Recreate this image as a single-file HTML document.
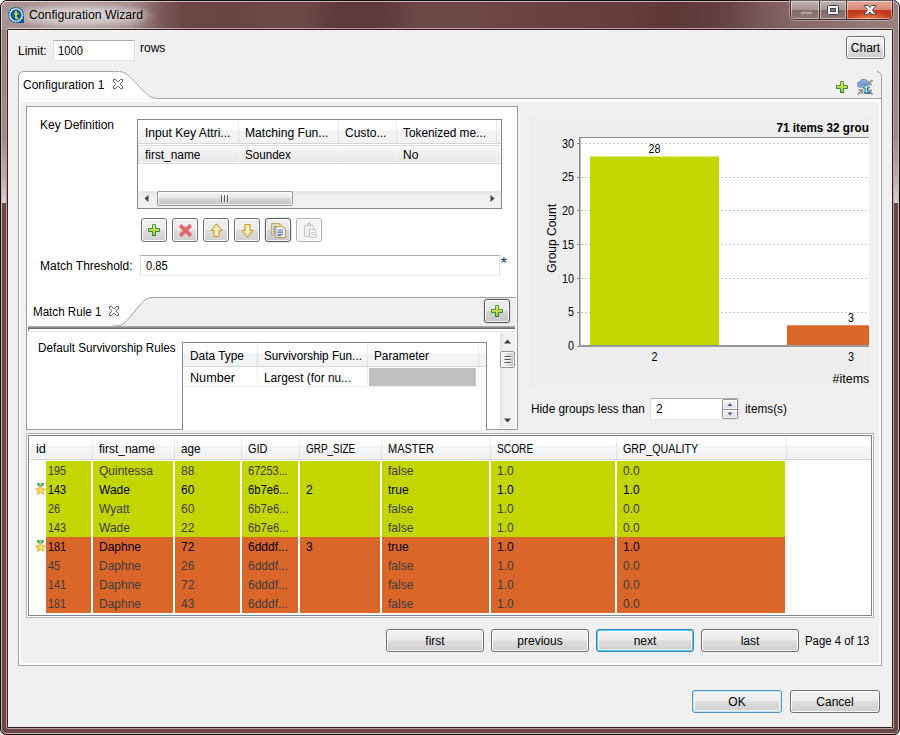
<!DOCTYPE html>
<html>
<head>
<meta charset="utf-8">
<title>Configuration Wizard</title>
<style>
html,body{margin:0;padding:0;background:#fff;}
body{width:900px;height:735px;position:relative;overflow:hidden;font-family:"Liberation Sans",sans-serif;font-size:12px;color:#000;}
.a{position:absolute;box-sizing:border-box;}
.t{position:absolute;white-space:nowrap;line-height:14px;height:14px;font-size:12px;color:#000;}
.g{color:#3c3c3c;}
.go{color:#3e3c3c;}
#win{left:0;top:0;width:900px;height:735px;border-radius:7px 7px 6px 6px;background:#6e4545;border:1px solid #141010;overflow:hidden;}
#titlebg{left:0;top:0;width:898px;height:29px;background:
 radial-gradient(ellipse 78px 15px at 80px 15px, rgba(255,255,255,.6) 0%, rgba(255,255,255,.42) 50%, rgba(255,255,255,0) 100%),
 linear-gradient(100deg, rgba(0,0,0,0) 300px, rgba(40,10,10,.24) 335px, rgba(40,10,10,.24) 375px, rgba(0,0,0,0) 415px, rgba(0,0,0,0) 620px, rgba(40,10,10,.1) 660px, rgba(40,10,10,.1) 700px, rgba(0,0,0,0) 750px),
 linear-gradient(90deg,#a99393 0px,#a68f8f 130px,#7c5959 160px,#6c4545 182px,#6a4343 230px,#6f4848 290px,#6f4848 450px,#694040 560px,#643b3b 670px,#6c4747 725px,#866565 790px,#9b8080 898px);}
.sidegl{width:4px;top:29px;height:173px;background:linear-gradient(#9b8080 0%,#a38989 62%,#bba8a8 84%,#ddd1d1 100%);}
#client{left:8px;top:30px;width:884px;height:697px;background:#f0f0f0;}
.btn{border:1px solid #707070;border-radius:3px;background:linear-gradient(#f2f2f2 0%,#ebebeb 48%,#dddddd 52%,#cfcfcf 100%);box-shadow:inset 0 0 0 1px rgba(255,255,255,.9);text-align:center;font-size:12px;line-height:23px;}
.btn.dis{border-color:#adb2b5;background:#f4f4f4;}
.btn.foc{border-color:#3c7fb1;box-shadow:inset 0 0 0 1px #48d2f5, inset 0 0 0 2px rgba(255,255,255,.6);}
.btn.def{border-color:#5a93bd;box-shadow:inset 0 0 0 1px #bfe6f7, inset 0 0 0 2px rgba(255,255,255,.7);}
.hdr{background:linear-gradient(#ffffff 0%,#ffffff 42%,#f4f5f7 46%,#f1f2f4 100%);border-bottom:1px solid #d5d5d5;}
.hs{width:1px;background:linear-gradient(#f2f2f2,#dcdde0);}
.inp{border-radius:1px;background:#fff;border:1px solid #e3e9ef;border-top-color:#abadb3;border-left-color:#dbdfe6;border-right-color:#dbdfe6;}
</style>
</head>
<body>
<div id="win" class="a">
  <div id="titlebg" class="a"></div>
  <div class="a sidegl" style="left:1px;"></div>
  <div class="a sidegl" style="left:893px;"></div>
  <div class="a" style="left:0;top:0;width:898px;height:733px;border-radius:6px 6px 5px 5px;box-shadow:inset 0 0 0 1px rgba(255,255,255,.62);"></div>
  <div class="a" style="left:5px;top:27px;width:888px;height:701px;border:1px solid rgba(255,255,255,.5);border-radius:2px;"></div>
  <div class="a" style="left:6px;top:28px;width:886px;height:699px;border:1px solid #35201f;border-radius:1px;"></div>
</div>
<div id="client" class="a"></div>
<svg class="a" style="left:8px;top:7px" width="16" height="16" viewBox="0 0 16 16">
<path d="M8 0A8 8 0 0 0 8 16H16V8A8 8 0 0 0 8 0Z" fill="#0b5ba3"/>
<circle cx="8" cy="8" r="6.2" fill="none" stroke="#fff" stroke-width="1.1"/>
<circle cx="8" cy="8" r="7.1" fill="none" stroke="#dfeaf5" stroke-width=".9" stroke-dasharray="1.2 1.6"/>
<path d="M7 4h1.9v2h1.6v1.4H8.9v2.6c0 .6.3.8.8.8h.8v1.4H9.2C7.700 12.2 7 11.500 7 10.200V7.400H5.900V6H7Z" fill="#cbdc2a"/>
</svg>
<div class="t " style="left:28.5px;top:8px;text-shadow:0 0 6px rgba(255,255,255,.9);transform:scaleX(1.0167);transform-origin:0 0;">Configuration Wizard</div>
<div class="a" style="left:790px;top:1px;width:103px;height:19px;border:1px solid #3d2a2a;border-top:none;border-radius:0 0 5px 5px;box-shadow:0 0 0 1px rgba(255,255,255,.35);overflow:hidden;">
 <div class="a" style="left:0;top:0;width:28px;height:18px;background:linear-gradient(#c0b1b1 0%,#a99696 47%,#836666 52%,#957a7a 100%);box-shadow:inset 0 0 0 1px rgba(255,255,255,.45);"></div>
 <div class="a" style="left:28px;top:0;width:1px;height:18px;background:#3d2a2a;"></div>
 <div class="a" style="left:29px;top:0;width:26px;height:18px;background:linear-gradient(#c0b1b1 0%,#a99696 47%,#836666 52%,#957a7a 100%);box-shadow:inset 0 0 0 1px rgba(255,255,255,.45);"></div>
 <div class="a" style="left:55px;top:0;width:1px;height:18px;background:#3d2a2a;"></div>
 <div class="a" style="left:56px;top:0;width:45px;height:18px;background:radial-gradient(ellipse 22px 7px at 50% 100%,rgba(240,150,90,.75),rgba(240,150,90,0)),linear-gradient(#e6aa9b 0%,#d98875 47%,#c3381f 52%,#c8421f 100%);box-shadow:inset 0 0 0 1px rgba(255,255,255,.45);"></div>
 <div class="a" style="left:9px;top:10px;width:13px;height:4px;background:#ad9c9c;border:1px solid #8f7b7b;border-radius:1px;"></div>
 <svg class="a" style="left:36px;top:4px" width="12" height="10" viewBox="0 0 12 10"><rect x=".5" y=".5" width="11" height="9" rx="1" fill="#f6f6f6" stroke="#3b3f55"/><rect x="3.500" y="3.500" width="5" height="3" fill="#927c7c" stroke="#3b3f55"/></svg>
 <svg class="a" style="left:72px;top:3px" width="14" height="12" viewBox="0 0 14 12"><path d="M1 1.500h4.300L7 3.600 8.700 1.500H13L9.300 5.800 13 10.200H8.700L7 8 5.300 10.200H1L4.700 5.800z" fill="#fff" stroke="#4a4c58" stroke-width="1" stroke-linejoin="round"/></svg>
</div>
<div class="t " style="left:18px;top:44px;">Limit:</div>
<div class="a inp" style="left:53px;top:40px;width:82px;height:21px;"></div>
<div class="t " style="left:58px;top:44px;transform:scaleX(0.9307);transform-origin:0 0;">1000</div>
<div class="t " style="left:140px;top:41px;">rows</div>
<div class="a btn" style="left:846px;top:36px;width:39px;height:23px;">Chart</div>
<div class="a " style="left:18px;top:98px;width:864px;height:568px;border:1px solid #a5a5a5;border-top:none;background:#f0f0f0;box-shadow:inset 1px 0 0 #fff, inset -1px 0 0 #fff, inset 0 -1px 0 #fff, inset 2px 0 0 #fbfbfb, inset -2px 0 0 #fbfbfb, inset 0 -2px 0 #fbfbfb;"></div>
<svg class="a" style="left:18px;top:70px" width="866" height="32" viewBox="0 0 866 32">
<path d="M0.500 32V7Q0.500 1.500 6 1.500H99C106 1.500 108.500 3.500 112.500 7.500L127 22.500C132 27.500 135 28.500 142 28.500H863V32Z" fill="#fff"/>
<rect x="1" y="29" width="862" height="2" fill="#fdfdfd"/>
<path d="M0.500 32V7Q0.500 1.500 6 1.500H99C106 1.500 108.500 3.500 112.500 7.500L127 22.500C132 27.500 135 28.500 142 28.500H863.500" fill="none" stroke="#a6a6a6" stroke-width="1"/>
<path d="M859 1.500Q863.500 2.500 863.500 7V32" fill="none" stroke="#a0a0a0" stroke-width="1"/>
</svg>
<div class="t " style="left:23px;top:78px;">Configuration 1</div>
<svg class="a" style="left:113px;top:79px" width="10" height="10" viewBox="0 0 10 10"><path d="M.5 .5H2.500L4.500 2.500H5.500L7.500 .5H9.500V2.500L7.500 4.500V5.500L9.500 7.500V9.500H7.500L5.500 7.500H4.500L2.500 9.500H.5V7.500L2.500 5.500V4.500L.5 2.500Z" fill="#fff" stroke="#5c5c5c" stroke-width="1"/></svg>
<svg class="a" style="left:836px;top:81px" width="12" height="12" viewBox="0 0 12 12"><defs><linearGradient id="pg1" x1="0" y1="0" x2="0" y2="1"><stop offset="0" stop-color="#e4ea5e"/><stop offset="1" stop-color="#a9cb3c"/></linearGradient><linearGradient id="ps1" x1="0" y1="0" x2="0" y2="1"><stop offset="0" stop-color="#52a552"/><stop offset="1" stop-color="#207a36"/></linearGradient></defs><path d="M4.500 .5h3v4h4v3h-4v4h-3v-4h-4v-3h4z" fill="url(#pg1)" stroke="url(#ps1)" stroke-width="1"/></svg>
<svg class="a" style="left:857px;top:79px" width="16" height="16" viewBox="0 0 16 16">
<path d="M15.500 1l-3.800 3.800M15 5.500h-3.800V1.700" stroke="#8c8c8c" stroke-width="1.600" fill="none"/>
<path d="M1 15.500l4-4M1.500 11h4v4" stroke="#8c8c8c" stroke-width="1.600" fill="none"/>
<path d="M15.500 15.500l-3.500-3.500M11.500 15v-3.500H15" stroke="#8c8c8c" stroke-width="1.600" fill="none"/>
<circle cx="3.300" cy="5.500" r="3" fill="#8aa6dc" stroke="#6f8fd0" stroke-width=".8"/>
<circle cx="6.600" cy="3.300" r="3.400" fill="#7f9edb" stroke="#6a8acc" stroke-width=".8"/>
<path d="M4.500 2.500q2-1.500 4 0" stroke="#b9cbee" stroke-width=".9" fill="none"/>
<path d="M8 13.200V9H5.800L9.200 5.300 12.700 9H10.500V12.300" fill="#b8edc8" stroke="#1a66aa" stroke-width="1" stroke-linejoin="round"/>
<path d="M7.200 13.500q3 1.500 6.300.2" stroke="#1a66aa" stroke-width="1.500" fill="none"/>
</svg>
<div class="a " style="left:26px;top:106px;width:492px;height:324px;border:1px solid #979ba2;background:#fff;"></div>
<div class="t " style="left:40px;top:118px;">Key Definition</div>
<div class="a " style="left:137px;top:119px;width:365px;height:90px;border:1px solid #828790;background:#fff;"></div>
<div class="a hdr" style="left:138px;top:120px;width:363px;height:24px;"></div>
<div class="a hs" style="left:238px;top:120px;width:1px;height:23px;"></div>
<div class="a hs" style="left:338px;top:120px;width:1px;height:23px;"></div>
<div class="a hs" style="left:396px;top:120px;width:1px;height:23px;"></div>
<div class="a hs" style="left:496px;top:120px;width:1px;height:23px;"></div>
<div class="t " style="left:145px;top:126px;transform:scaleX(1.0089);transform-origin:0 0;">Input Key Attri...</div>
<div class="t " style="left:245px;top:126px;transform:scaleX(1.0089);transform-origin:0 0;">Matching Fun...</div>
<div class="t " style="left:345px;top:126px;transform:scaleX(1.0018);transform-origin:0 0;">Custo...</div>
<div class="t " style="left:403px;top:126px;transform:scaleX(0.9866);transform-origin:0 0;">Tokenized me...</div>
<div class="a " style="left:138px;top:145px;width:363px;height:19px;border:1px solid #dadada;border-right:none;border-radius:2px 0 0 2px;background:linear-gradient(#f9f9f9,#e6e6e6);box-shadow:inset 0 0 0 1px rgba(255,255,255,.7);"></div>
<div class="a " style="left:238px;top:146px;width:1px;height:17px;background:#f3f3f3;"></div>
<div class="a " style="left:338px;top:146px;width:1px;height:17px;background:#f3f3f3;"></div>
<div class="a " style="left:396px;top:146px;width:1px;height:17px;background:#f3f3f3;"></div>
<div class="a " style="left:496px;top:146px;width:1px;height:17px;background:#f3f3f3;"></div>
<div class="t " style="left:145px;top:148px;transform:scaleX(0.9888);transform-origin:0 0;">first_name</div>
<div class="t " style="left:245px;top:148px;transform:scaleX(0.9686);transform-origin:0 0;">Soundex</div>
<div class="t " style="left:403px;top:148px;">No</div>
<div class="a " style="left:138px;top:191px;width:363px;height:17px;background:linear-gradient(#e4e4e4,#f0f0f0 30%,#f1f1f1);"></div>
<div class="a " style="left:157px;top:191px;width:136px;height:15px;border:1px solid #979797;border-radius:2px;background:linear-gradient(#f5f5f5 0%,#e9e9e9 45%,#d9d9d9 50%,#c4c4c4 100%);box-shadow:inset 0 0 0 1px rgba(255,255,255,.75);"></div>
<svg class="a" style="left:138px;top:191px" width="363" height="17" viewBox="0 0 363 17">
<path d="M10.500 4v7l-4-3.500z" fill="#404040"/><path d="M352.500 4v7l4-3.500z" fill="#404040"/>
<path d="M83.500 4v7M86.500 4v7M89.500 4v7" stroke="#50565e" stroke-width="1"/>
<path d="M84.500 4v7M87.500 4v7M90.500 4v7" stroke="#fafafa" stroke-width="1"/>
</svg>
<div class="a btn" style="left:141px;top:218px;width:26px;height:24px;"><svg class="a" style="left:6px;top:5px" width="12" height="12" viewBox="0 0 12 12"><defs><linearGradient id="pg2" x1="0" y1="0" x2="0" y2="1"><stop offset="0" stop-color="#e4ea5e"/><stop offset="1" stop-color="#a9cb3c"/></linearGradient><linearGradient id="ps2" x1="0" y1="0" x2="0" y2="1"><stop offset="0" stop-color="#52a552"/><stop offset="1" stop-color="#207a36"/></linearGradient></defs><path d="M4.500 .5h3v4h4v3h-4v4h-3v-4h-4v-3h4z" fill="url(#pg2)" stroke="url(#ps2)" stroke-width="1"/></svg></div>
<div class="a btn" style="left:172px;top:218px;width:26px;height:24px;"><svg class="a" style="left:6px;top:5px" width="13" height="13" viewBox="0 0 13 13"><path d="M2.300.8L6.500 4.600 10.700.8 12.300 2.600 8.500 6.500 12.300 10.400 10.700 12.200 6.500 8.400 2.300 12.200.7 10.400 4.500 6.500.7 2.600z" fill="#ea5d68" stroke="#e4707a" stroke-width="1.300" stroke-linejoin="round"/></svg></div>
<div class="a btn" style="left:203px;top:218px;width:26px;height:24px;"><svg class="a" style="left:6px;top:4px" width="13" height="15" viewBox="0 0 13 15"><path d="M6.500 1L12 7.500H9V13.500H4V7.500H1z" fill="#fdeeb8" stroke="#d2962a" stroke-width="1.100" stroke-linejoin="round"/><path d="M6.500 3L9.800 6.800H8V12.500H6.300z" fill="#fff6cf" opacity=".8"/></svg></div>
<div class="a btn" style="left:234px;top:218px;width:26px;height:24px;"><svg class="a" style="left:6px;top:4px" width="13" height="15" viewBox="0 0 13 15"><path d="M6.500 14L12 7.500H9V1.500H4V7.500H1z" fill="#fdeeb8" stroke="#d2962a" stroke-width="1.100" stroke-linejoin="round"/><path d="M6.500 12L9.800 8.200H8V2.500H6.300z" fill="#fff6cf" opacity=".8"/></svg></div>
<div class="a btn" style="left:265px;top:218px;width:26px;height:24px;border-color:#5a5a5a;box-shadow:inset 0 0 0 1px rgba(255,255,255,.8),0 0 0 1px rgba(90,90,90,.12);background:linear-gradient(#efefef 0%,#e6e6e6 48%,#d4d4d4 52%,#c6c6c6 100%);"><svg class="a" style="left:4px;top:3px" width="17" height="17" viewBox="0 0 16 16"><path d="M1.500 1.500h7l2 2v9h-9z" fill="#ece2c2" stroke="#c2a964"/><path d="M3 4.500h5M3 6.500h5M3 8.500h5M3 10.500h5" stroke="#5a78b8"/><path d="M5.500 4.500h7l2 2v8h-9z" fill="#fdfdff" stroke="#b99b4e"/><path d="M7 7.500h5.500M7 9.500h5.500M7 11.500h5.500M7 13h4" stroke="#4a68b0"/></svg></div>
<div class="a btn dis" style="left:296px;top:218px;width:26px;height:24px;"><svg class="a" style="left:5px;top:3px" width="16" height="17" viewBox="0 0 16 17"><path d="M2.500 3.500h9v11h-9z" fill="#f1f1f1" stroke="#c6c6c6"/><path d="M5 3.500l1-2h2l1 2z" fill="#e6e6e6" stroke="#c6c6c6"/><path d="M7.500 7.500h5l1.500 1.500v6h-6.500z" fill="#f8f8f8" stroke="#c0c0c0"/><path d="M9 10.500h3.500M9 12.500h3.500" stroke="#c6c6c6"/></svg></div>
<div class="t " style="left:40px;top:259px;">Match Threshold:</div>
<div class="a inp" style="left:140px;top:255px;width:360px;height:21px;"></div>
<div class="t " style="left:145.5px;top:259px;transform:scaleX(0.9268);transform-origin:0 0;">0.85</div>
<div class="t " style="left:500.5px;top:257px;color:#1c3a6e;font-size:17px;">*</div>
<svg class="a" style="left:27px;top:296px" width="490" height="37" viewBox="0 0 490 37">
<path d="M86 30C93 30 96 28.500 100 24.500L113 9C117 4 120 1.500 128 1.500H489V30Z" fill="#f0f0f0"/>
<path d="M86 30C93 30 96 28.500 100 24.500L113 9C117 4 120 1.500 128 1.500H489" fill="none" stroke="#a0a0a0" stroke-width="1"/>
<rect x="1" y="30" width="487" height="1" fill="#a8a8a8"/>
<rect x="1" y="31" width="487" height="1" fill="#8c8c8c"/>
<rect x="1" y="32" width="487" height="1" fill="#6b6b6b"/>
<rect x="1" y="33" width="1" height="2" fill="#7a7a7a"/>
<rect x="2" y="35" width="486" height="1" fill="#e3e3e3"/>
</svg>
<div class="t " style="left:32.5px;top:305px;transform:scaleX(0.9672);transform-origin:0 0;">Match Rule 1</div>
<svg class="a" style="left:109px;top:306px" width="10" height="10" viewBox="0 0 10 10"><path d="M.5 .5H2.500L4.500 2.500H5.500L7.500 .5H9.500V2.500L7.500 4.500V5.500L9.500 7.500V9.500H7.500L5.500 7.500H4.500L2.500 9.500H.5V7.500L2.500 5.500V4.500L.5 2.500Z" fill="#fff" stroke="#5c5c5c" stroke-width="1"/></svg>
<div class="a btn" style="left:484px;top:299px;width:26px;height:24px;border-color:#5a5a5a;box-shadow:inset 0 0 0 1px rgba(255,255,255,.8),0 0 0 1px rgba(90,90,90,.12);background:linear-gradient(#efefef 0%,#e6e6e6 48%,#d4d4d4 52%,#c6c6c6 100%);"><svg class="a" style="left:6px;top:5px" width="12" height="12" viewBox="0 0 12 12"><defs><linearGradient id="pg3" x1="0" y1="0" x2="0" y2="1"><stop offset="0" stop-color="#e4ea5e"/><stop offset="1" stop-color="#a9cb3c"/></linearGradient><linearGradient id="ps3" x1="0" y1="0" x2="0" y2="1"><stop offset="0" stop-color="#52a552"/><stop offset="1" stop-color="#207a36"/></linearGradient></defs><path d="M4.500 .5h3v4h4v3h-4v4h-3v-4h-4v-3h4z" fill="url(#pg3)" stroke="url(#ps3)" stroke-width="1"/></svg></div>
<div class="t " style="left:38px;top:341px;transform:scaleX(0.9730);transform-origin:0 0;">Default Survivorship Rules</div>
<div class="a " style="left:182px;top:342px;width:305px;height:88px;border:1px solid #828790;border-bottom:none;background:#fff;"></div>
<div class="a hdr" style="left:183px;top:343px;width:303px;height:24px;"></div>
<div class="a hs" style="left:257px;top:343px;width:1px;height:23px;"></div>
<div class="a " style="left:257px;top:367px;width:1px;height:19px;background:#f0f0f0;"></div>
<div class="a hs" style="left:367px;top:343px;width:1px;height:23px;"></div>
<div class="a " style="left:367px;top:367px;width:1px;height:19px;background:#f0f0f0;"></div>
<div class="a hs" style="left:478px;top:343px;width:1px;height:23px;"></div>
<div class="a " style="left:478px;top:367px;width:1px;height:19px;background:#f0f0f0;"></div>
<div class="a " style="left:183px;top:386px;width:296px;height:1px;background:#f0f0f0;"></div>
<div class="t " style="left:190px;top:349px;transform:scaleX(0.9894);transform-origin:0 0;">Data Type</div>
<div class="t " style="left:264px;top:349px;transform:scaleX(0.9787);transform-origin:0 0;">Survivorship Fun...</div>
<div class="t " style="left:374px;top:349px;transform:scaleX(0.9798);transform-origin:0 0;">Parameter</div>
<div class="t " style="left:190px;top:371px;transform:scaleX(1.0529);transform-origin:0 0;">Number</div>
<div class="t " style="left:264px;top:371px;transform:scaleX(0.9874);transform-origin:0 0;">Largest (for nu...</div>
<div class="a " style="left:369px;top:368px;width:107px;height:18px;background:#c0c0c0;"></div>
<div class="a " style="left:500px;top:333px;width:15px;height:95px;background:linear-gradient(90deg,#e4e4e4,#f0f0f0 30%,#f1f1f1);"></div>
<div class="a " style="left:500px;top:351px;width:15px;height:17px;border:1px solid #979797;border-radius:2px;background:linear-gradient(90deg,#f5f5f5 0%,#e9e9e9 45%,#d9d9d9 50%,#c4c4c4 100%);box-shadow:inset 0 0 0 1px rgba(255,255,255,.75);"></div>
<svg class="a" style="left:500px;top:333px" width="16" height="95" viewBox="0 0 16 95">
<path d="M4 10.500h7l-3.500-4z" fill="#404040"/><path d="M4 85.500h7l-3.500 4z" fill="#404040"/>
<path d="M4.500 23.500h6M4.500 26.500h6M4.500 29.500h6" stroke="#50565e" stroke-width="1"/>
<path d="M4.500 24.500h6M4.500 27.500h6M4.500 30.500h6" stroke="#fafafa" stroke-width="1"/>
</svg>
<svg class="a" style="left:531px;top:116px" width="338" height="272" viewBox="0 0 338 272" font-family="Liberation Sans, sans-serif" font-size="12"><rect x="0" y="0" width="338" height="272" fill="#eeeeee"/><rect x="49" y="22" width="300" height="207" fill="#fff"/><path d="M50 196.5H338" stroke="#c8c8c8" stroke-width="1" stroke-dasharray="2 2"/><path d="M50 162.5H338" stroke="#c8c8c8" stroke-width="1" stroke-dasharray="2 2"/><path d="M50 128.5H338" stroke="#c8c8c8" stroke-width="1" stroke-dasharray="2 2"/><path d="M50 94.5H338" stroke="#c8c8c8" stroke-width="1" stroke-dasharray="2 2"/><path d="M50 61.5H338" stroke="#c8c8c8" stroke-width="1" stroke-dasharray="2 2"/><path d="M50 27.5H338" stroke="#c8c8c8" stroke-width="1" stroke-dasharray="2 2"/><rect x="59" y="40.50" width="129" height="189.00" fill="#c4d600"/><rect x="256" y="209.25" width="129" height="20.25" fill="#da662a"/><path d="M48.5 229.5V21.5H338" fill="none" stroke="#8a8a8a" stroke-width="1"/><path d="M48 230H338" fill="none" stroke="#989898" stroke-width="2"/><path d="M49.5 229V22" fill="none" stroke="#b8b8b8" stroke-width="1"/><path d="M46 230.5h2" stroke="#8a8a8a" stroke-width="1"/><text transform="translate(43,234.1) scale(.9,1)" text-anchor="end" fill="#000">0</text><path d="M46 196.5h2" stroke="#8a8a8a" stroke-width="1"/><text transform="translate(43,200.3) scale(.9,1)" text-anchor="end" fill="#000">5</text><path d="M46 162.5h2" stroke="#8a8a8a" stroke-width="1"/><text transform="translate(43,166.6) scale(.9,1)" text-anchor="end" fill="#000">10</text><path d="M46 128.5h2" stroke="#8a8a8a" stroke-width="1"/><text transform="translate(43,132.8) scale(.9,1)" text-anchor="end" fill="#000">15</text><path d="M46 94.5h2" stroke="#8a8a8a" stroke-width="1"/><text transform="translate(43,99.1) scale(.9,1)" text-anchor="end" fill="#000">20</text><path d="M46 61.5h2" stroke="#8a8a8a" stroke-width="1"/><text transform="translate(43,65.3) scale(.9,1)" text-anchor="end" fill="#000">25</text><path d="M46 27.5h2" stroke="#8a8a8a" stroke-width="1"/><text transform="translate(43,31.6) scale(.9,1)" text-anchor="end" fill="#000">30</text><text transform="translate(123.5,37.3) scale(.9,1)" text-anchor="middle">28</text><text transform="translate(320,206.1) scale(.9,1)" text-anchor="middle">3</text><text transform="translate(123.5,245) scale(.9,1)" text-anchor="middle">2</text><text transform="translate(320,245) scale(.9,1)" text-anchor="middle">3</text><text transform="translate(301.6,266.5) scale(1.04,1)">#items</text><text transform="translate(245.5,16) scale(.9,1)" font-weight="bold" font-size="13">71 items 32 groups</text><text transform="translate(25,122.30000000000001) rotate(-90)" text-anchor="middle">Group Count</text></svg>
<div class="t " style="left:531px;top:402px;transform:scaleX(0.9814);transform-origin:0 0;">Hide groups less than</div>
<div class="a inp" style="left:650px;top:398px;width:89px;height:22px;"></div>
<div class="t " style="left:656px;top:402px;">2</div>
<div class="a " style="left:722px;top:399px;width:16px;height:20px;background:#8e9399;border-radius:2px;"></div>
<div class="a " style="left:723px;top:400px;width:14px;height:9px;border-radius:1px 1px 0 0;background:linear-gradient(#f6f6f6,#dedede);box-shadow:inset 0 0 0 1px rgba(255,255,255,.7);"></div>
<div class="a " style="left:723px;top:410px;width:14px;height:8px;border-radius:0 0 1px 1px;background:linear-gradient(#f6f6f6,#dedede);box-shadow:inset 0 0 0 1px rgba(255,255,255,.7);"></div>
<svg class="a" style="left:722px;top:399px" width="16" height="20" viewBox="0 0 16 20"><path d="M5.500 7h5l-2.500-3z" fill="#4a5aa2"/><path d="M5.500 13.500h5l-2.500 3z" fill="#4a5aa2"/></svg>
<div class="t " style="left:745px;top:402px;transform:scaleX(0.9815);transform-origin:0 0;">items(s)</div>
<div class="a " style="left:26px;top:433px;width:848px;height:185px;border:1px solid #b4b8be;background:#fff;"></div>
<div class="a " style="left:28px;top:435px;width:844px;height:181px;border:1px solid #7f858e;background:#fff;"></div>
<div class="a hdr" style="left:29px;top:436px;width:842px;height:24px;"></div>
<div class="a hs" style="left:92px;top:436px;width:1px;height:23px;"></div>
<div class="t " style="left:36px;top:442px;transform:scaleX(1.0659);transform-origin:0 0;">id</div>
<div class="a hs" style="left:174px;top:436px;width:1px;height:23px;"></div>
<div class="t " style="left:99px;top:442px;transform:scaleX(0.9979);transform-origin:0 0;">first_name</div>
<div class="a hs" style="left:241px;top:436px;width:1px;height:23px;"></div>
<div class="t " style="left:181px;top:442px;transform:scaleX(0.9783);transform-origin:0 0;">age</div>
<div class="a hs" style="left:299px;top:436px;width:1px;height:23px;"></div>
<div class="t " style="left:248px;top:442px;transform:scaleX(0.9154);transform-origin:0 0;">GID</div>
<div class="a hs" style="left:381px;top:436px;width:1px;height:23px;"></div>
<div class="t " style="left:306px;top:442px;transform:scaleX(0.8267);transform-origin:0 0;">GRP_SIZE</div>
<div class="a hs" style="left:490px;top:436px;width:1px;height:23px;"></div>
<div class="t " style="left:388px;top:442px;transform:scaleX(0.9165);transform-origin:0 0;">MASTER</div>
<div class="a hs" style="left:616px;top:436px;width:1px;height:23px;"></div>
<div class="t " style="left:497px;top:442px;transform:scaleX(0.8475);transform-origin:0 0;">SCORE</div>
<div class="a hs" style="left:786px;top:436px;width:1px;height:23px;"></div>
<div class="t " style="left:623px;top:442px;transform:scaleX(0.8953);transform-origin:0 0;">GRP_QUALITY</div>
<div class="a " style="left:46px;top:461px;width:739px;height:76px;background:#c4d600;"></div>
<div class="a " style="left:46px;top:537px;width:739px;height:76px;background:#da662a;"></div>
<div class="a " style="left:91px;top:461px;width:2px;height:152px;background:#fff;"></div>
<div class="a " style="left:173px;top:461px;width:2px;height:152px;background:#fff;"></div>
<div class="a " style="left:240px;top:461px;width:2px;height:152px;background:#fff;"></div>
<div class="a " style="left:298px;top:461px;width:2px;height:152px;background:#fff;"></div>
<div class="a " style="left:380px;top:461px;width:2px;height:152px;background:#fff;"></div>
<div class="a " style="left:489px;top:461px;width:2px;height:152px;background:#fff;"></div>
<div class="a " style="left:615px;top:461px;width:2px;height:152px;background:#fff;"></div>
<div class="a " style="left:786px;top:461px;width:1px;height:152px;background:#eef3fa;"></div>
<div class="t g" style="left:47.5px;top:464px;transform:scaleX(0.8998);transform-origin:0 0;">195</div>
<div class="t g" style="left:99px;top:464px;">Quintessa</div>
<div class="t g" style="left:181px;top:464px;">88</div>
<div class="t g" style="left:248px;top:464px;transform:scaleX(0.9189);transform-origin:0 0;">67253...</div>
<div class="t g" style="left:388px;top:464px;">false</div>
<div class="t g" style="left:497px;top:464px;">1.0</div>
<div class="t g" style="left:623px;top:464px;">0.0</div>
<div class="t " style="left:47.5px;top:483px;transform:scaleX(0.8998);transform-origin:0 0;">143</div>
<div class="t " style="left:99px;top:483px;">Wade</div>
<div class="t " style="left:181px;top:483px;">60</div>
<div class="t " style="left:248px;top:483px;transform:scaleX(0.9354);transform-origin:0 0;">6b7e6...</div>
<div class="t " style="left:306px;top:483px;">2</div>
<div class="t " style="left:388px;top:483px;">true</div>
<div class="t " style="left:497px;top:483px;">1.0</div>
<div class="t " style="left:623px;top:483px;">1.0</div>
<svg class="a" style="left:34.5px;top:483px" width="11" height="12" viewBox="0 0 12 14" preserveAspectRatio="none"><path d="M2.500 0h7v3l-3.500 2-3.500-2z" fill="#3aa04a"/><path d="M4.500 0h3v3.500h-3z" fill="#8fd08a"/><path d="M6 3.200l1.700 3.300 3.700.5-2.700 2.600.7 3.700L6 11.500l-3.400 1.800.7-3.700L.6 7l3.700-.5z" fill="#f9d24a" stroke="#e0a21e" stroke-width=".8" stroke-linejoin="round"/><path d="M6 5l1 2 2.200.3-1.600 1.500.3 2.100L6 10z" fill="#fde89a"/></svg>
<div class="t g" style="left:47.5px;top:502px;transform:scaleX(0.9161);transform-origin:0 0;">26</div>
<div class="t g" style="left:99px;top:502px;">Wyatt</div>
<div class="t g" style="left:181px;top:502px;">60</div>
<div class="t g" style="left:248px;top:502px;transform:scaleX(0.9354);transform-origin:0 0;">6b7e6...</div>
<div class="t g" style="left:388px;top:502px;">false</div>
<div class="t g" style="left:497px;top:502px;">1.0</div>
<div class="t g" style="left:623px;top:502px;">0.0</div>
<div class="t g" style="left:47.5px;top:521px;transform:scaleX(0.8998);transform-origin:0 0;">143</div>
<div class="t g" style="left:99px;top:521px;">Wade</div>
<div class="t g" style="left:181px;top:521px;">22</div>
<div class="t g" style="left:248px;top:521px;transform:scaleX(0.9354);transform-origin:0 0;">6b7e6...</div>
<div class="t g" style="left:388px;top:521px;">false</div>
<div class="t g" style="left:497px;top:521px;">1.0</div>
<div class="t g" style="left:623px;top:521px;">0.0</div>
<div class="t " style="left:47.5px;top:540px;transform:scaleX(0.8998);transform-origin:0 0;">181</div>
<div class="t " style="left:99px;top:540px;">Daphne</div>
<div class="t " style="left:181px;top:540px;">72</div>
<div class="t " style="left:248px;top:540px;">6dddf...</div>
<div class="t " style="left:306px;top:540px;">3</div>
<div class="t " style="left:388px;top:540px;">true</div>
<div class="t " style="left:497px;top:540px;">1.0</div>
<div class="t " style="left:623px;top:540px;">1.0</div>
<svg class="a" style="left:34.5px;top:540px" width="11" height="12" viewBox="0 0 12 14" preserveAspectRatio="none"><path d="M2.500 0h7v3l-3.500 2-3.500-2z" fill="#3aa04a"/><path d="M4.500 0h3v3.500h-3z" fill="#8fd08a"/><path d="M6 3.200l1.700 3.300 3.700.5-2.700 2.600.7 3.700L6 11.500l-3.400 1.800.7-3.700L.6 7l3.700-.5z" fill="#f9d24a" stroke="#e0a21e" stroke-width=".8" stroke-linejoin="round"/><path d="M6 5l1 2 2.200.3-1.600 1.500.3 2.100L6 10z" fill="#fde89a"/></svg>
<div class="t go" style="left:47.5px;top:559px;transform:scaleX(0.9161);transform-origin:0 0;">45</div>
<div class="t go" style="left:99px;top:559px;">Daphne</div>
<div class="t go" style="left:181px;top:559px;">26</div>
<div class="t go" style="left:248px;top:559px;">6dddf...</div>
<div class="t go" style="left:388px;top:559px;">false</div>
<div class="t go" style="left:497px;top:559px;">1.0</div>
<div class="t go" style="left:623px;top:559px;">0.0</div>
<div class="t go" style="left:47.5px;top:578px;transform:scaleX(0.8998);transform-origin:0 0;">141</div>
<div class="t go" style="left:99px;top:578px;">Daphne</div>
<div class="t go" style="left:181px;top:578px;">72</div>
<div class="t go" style="left:248px;top:578px;">6dddf...</div>
<div class="t go" style="left:388px;top:578px;">false</div>
<div class="t go" style="left:497px;top:578px;">1.0</div>
<div class="t go" style="left:623px;top:578px;">0.0</div>
<div class="t go" style="left:47.5px;top:597px;transform:scaleX(0.8998);transform-origin:0 0;">181</div>
<div class="t go" style="left:99px;top:597px;">Daphne</div>
<div class="t go" style="left:181px;top:597px;">43</div>
<div class="t go" style="left:248px;top:597px;">6dddf...</div>
<div class="t go" style="left:388px;top:597px;">false</div>
<div class="t go" style="left:497px;top:597px;">1.0</div>
<div class="t go" style="left:623px;top:597px;">0.0</div>
<div class="a btn" style="left:386px;top:629px;width:98px;height:23px;">first</div>
<div class="a btn" style="left:491px;top:629px;width:98px;height:23px;">previous</div>
<div class="a btn foc" style="left:596px;top:629px;width:98px;height:23px;">next</div>
<div class="a btn" style="left:701px;top:629px;width:98px;height:23px;">last</div>
<div class="t " style="left:805px;top:634px;transform:scaleX(0.9461);transform-origin:0 0;">Page 4 of 13</div>
<div class="a btn def" style="left:692px;top:690px;width:90px;height:23px;">OK</div>
<div class="a btn" style="left:790px;top:690px;width:90px;height:23px;">Cancel</div>
</body>
</html>
